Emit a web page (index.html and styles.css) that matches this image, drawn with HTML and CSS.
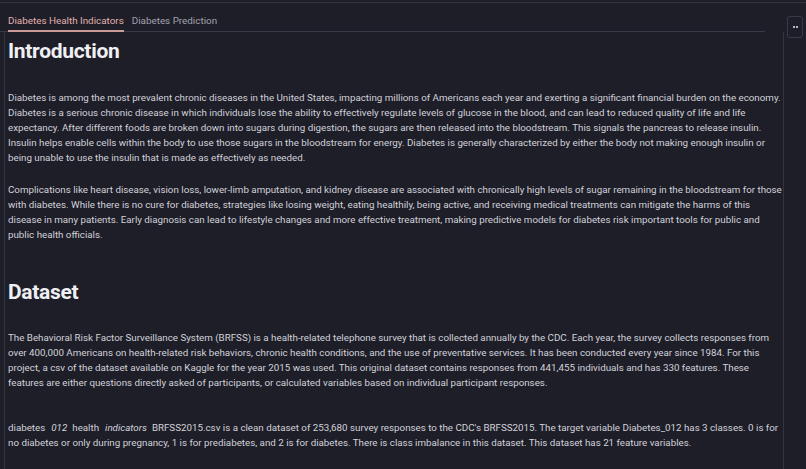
FILE: index.html
```html
<!DOCTYPE html>
<html>
<head>
<meta charset="utf-8">
<link rel="stylesheet" href="styles.css">
</head>
<body>
<div class="topline"></div>
<div class="tabbar">
  <div class="tabs">
    <div class="tab active">Diabetes Health Indicators</div>
    <div class="tab">Diabetes Prediction</div>
  </div>
  <div class="more"><span class="dot"></span><span class="dot"></span></div>
</div>
<div class="panel">
  <div class="content">
    <h2>Introduction</h2>
    <p>Diabetes is among the most prevalent chronic diseases in the United States, impacting millions of Americans each year and exerting a significant financial burden on the economy. Diabetes is a serious chronic disease in which individuals lose the ability to effectively regulate levels of glucose in the blood, and can lead to reduced quality of life and life expectancy. After different foods are broken down into sugars during digestion, the sugars are then released into the bloodstream. This signals the pancreas to release insulin. Insulin helps enable cells within the body to use those sugars in the bloodstream for energy. Diabetes is generally characterized by either the body not making enough insulin or being unable to use the insulin that is made as effectively as needed.</p>
    <p>Complications like heart disease, vision loss, lower-limb amputation, and kidney disease are associated with chronically high levels of sugar remaining in the bloodstream for those with diabetes. While there is no cure for diabetes, strategies like losing weight, eating healthily, being active, and receiving medical treatments can mitigate the harms of this disease in many patients. Early diagnosis can lead to lifestyle changes and more effective treatment, making predictive models for diabetes risk important tools for public and public health officials.</p>
    <h2 class="second">Dataset</h2>
    <p>The Behavioral Risk Factor Surveillance System (BRFSS) is a health-related telephone survey that is collected annually by the CDC. Each year, the survey collects responses from over 400,000 Americans on health-related risk behaviors, chronic health conditions, and the use of preventative services. It has been conducted every year since 1984. For this project, a csv of the dataset available on Kaggle for the year 2015 was used. This original dataset contains responses from 441,455 individuals and has 330 features. These features are either questions directly asked of participants, or calculated variables based on individual participant responses.</p>
    <p class="gap">diabetes<em>012</em>health<em>indicators</em>BRFSS2015.csv is a clean dataset of 253,680 survey responses to the CDC's BRFSS2015. The target variable Diabetes_012 has 3 classes. 0 is for no diabetes or only during pregnancy, 1 is for prediabetes, and 2 is for diabetes. There is class imbalance in this dataset. This dataset has 21 feature variables.</p>
  </div>
</div>
</body>
</html>
```
FILE: styles.css
```css
html, body {
  margin: 0;
  padding: 0;
  background: #1e1e28;
  height: 469px;
  overflow: hidden;
}
body {
  font-family: Roboto, "Liberation Sans", sans-serif;
  color: #d2d2da;
}
.topline {
  height: 2px;
  border-bottom: 1px solid #34343f;
}
.tabbar {
  position: relative;
  height: 28px;
  width: 765px;
  border-bottom: 1px solid #3a3a47;
}
.tabs {
  display: flex;
  gap: 8px;
  padding: 10px 0 0 8px;
}
.tab {
  font-size: 9.85px;
  line-height: 16px;
  color: #a3a3b0;
  padding-bottom: 1px;
}
.tab.active {
  color: #e2b1ae;
  border-bottom: 2px solid #c99a98;
}
.more {
  position: absolute;
  left: 787px;
  top: 13px;
  width: 14px;
  height: 20px;
  border: 1px solid #3a3a47;
  border-radius: 3px;
  display: flex;
  align-items: center;
  justify-content: center;
  gap: 1px;
}
.dot {
  width: 2px;
  height: 2px;
  background: #b8b8c4;
}
.panel {
  margin-left: 4px;
  width: 778px;
  border-left: 1px solid #34343f;
  border-right: 1px solid #34343f;
  height: 440px;
}
.content {
  padding: 5px 0 0 3px;
  width: 776px;
}
h2 {
  margin: 0;
  font-size: 21px;
  line-height: 28px;
  font-weight: 700;
  color: #f0f0f4;
  letter-spacing: -0.3px;
}
h2.second {
  margin-top: 36px;
}
p {
  margin: 0 0 17px;
  font-size: 9.77px;
  line-height: 15px;
}
h2 + p {
  margin-top: 25px;
}
h2.second + p {
  margin-top: 24px;
}
p.gap {
  margin-top: 30px;
}
em {
  font-style: italic;
  display: inline-block;
  margin: 0 5px 0 6px;
}
```
